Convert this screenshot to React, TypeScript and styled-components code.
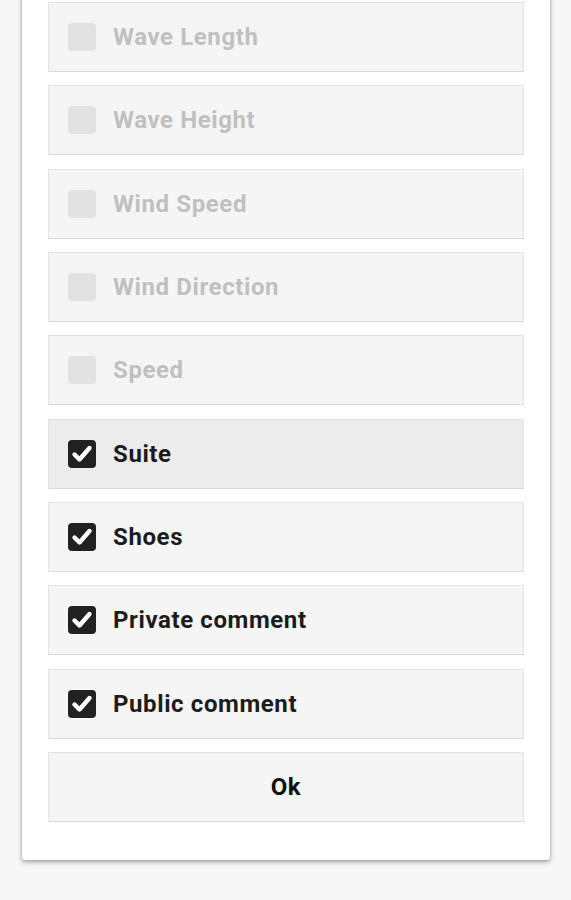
import React, { useState } from 'react';
import styled, { createGlobalStyle } from 'styled-components';

const GlobalStyle = createGlobalStyle`
  html, body {
    margin: 0;
    padding: 0;
    background-color: #f7f7f7;
    font-family: Roboto, "Liberation Sans", Arial, sans-serif;
    overflow: hidden;
  }
`;

const Page = styled.div`
  width: 571px;
  height: 900px;
  display: flex;
  justify-content: center;
  align-items: flex-start;
`;

const Dialog = styled.div`
  width: 528px;
  box-sizing: border-box;
  margin-top: -30px;
  margin-left: 1px;
  padding: 32px 26px 38px;
  background-color: #ffffff;
  border-radius: 3px;
  box-shadow: 0 2px 5px rgba(0, 0, 0, 0.35), 0 0 2px rgba(0, 0, 0, 0.2);
  display: flex;
  flex-direction: column;
  gap: 13.33px;
`;

const Row = styled.button<{ focused?: boolean }>`
  height: 70px;
  width: 100%;
  box-sizing: border-box;
  display: flex;
  align-items: center;
  padding: 0 0 0 19px;
  gap: 17px;
  background-color: ${({ focused }) => (focused ? '#ececec' : '#f5f5f5')};
  border: 1px solid #e3e3e3;
  border-bottom-color: #d9d9d9;
  border-radius: 1px;
  cursor: pointer;
  font-family: inherit;
  text-align: left;
`;

const Box = styled.span<{ checked: boolean; disabled: boolean }>`
  width: 28px;
  height: 28px;
  flex: none;
  border-radius: 4px;
  box-sizing: border-box;
  display: flex;
  align-items: center;
  justify-content: center;
  background-color: ${({ checked, disabled }) =>
    disabled ? '#e2e2e2' : checked ? '#212121' : '#ffffff'};
`;

const Label = styled.span<{ disabled: boolean }>`
  font-size: 24px;
  font-weight: 700;
  letter-spacing: 0.6px;
  color: ${({ disabled }) => (disabled ? '#c0c0c0' : '#1c1c1c')};
`;

const OkButton = styled.button`
  height: 70px;
  width: 100%;
  box-sizing: border-box;
  background-color: #f5f5f5;
  border: 1px solid #e3e3e3;
  border-bottom-color: #d9d9d9;
  border-radius: 1px;
  font-family: inherit;
  font-size: 24px;
  font-weight: 700;
  letter-spacing: 0.6px;
  color: #111111;
  cursor: pointer;
`;

function Check() {
  return (
    <svg width="22" height="22" viewBox="0 0 22 22">
      <path
        d="M3.5 11.5 L8.5 16.5 L18.5 5"
        fill="none"
        stroke="#ffffff"
        strokeWidth="4.4"
        strokeLinecap="round"
        strokeLinejoin="round"
      />
    </svg>
  );
}

type Option = { label: string; checked: boolean; disabled: boolean };

export default function App() {
  const [options, setOptions] = useState<Option[]>([
    { label: 'Wave Length', checked: false, disabled: true },
    { label: 'Wave Height', checked: false, disabled: true },
    { label: 'Wind Speed', checked: false, disabled: true },
    { label: 'Wind Direction', checked: false, disabled: true },
    { label: 'Speed', checked: false, disabled: true },
    { label: 'Suite', checked: true, disabled: false },
    { label: 'Shoes', checked: true, disabled: false },
    { label: 'Private comment', checked: true, disabled: false },
    { label: 'Public comment', checked: true, disabled: false },
  ]);

  const toggle = (i: number) =>
    setOptions((prev) =>
      prev.map((o, idx) => (idx === i && !o.disabled ? { ...o, checked: !o.checked } : o))
    );

  return (
    <Page>
      <GlobalStyle />
      <Dialog>
        {options.map((o, i) => (
          <Row key={o.label} focused={o.label === 'Suite'} onClick={() => toggle(i)}>
            <Box checked={o.checked} disabled={o.disabled}>
              {o.checked && <Check />}
            </Box>
            <Label disabled={o.disabled}>{o.label}</Label>
          </Row>
        ))}
        <OkButton>Ok</OkButton>
      </Dialog>
    </Page>
  );
}
